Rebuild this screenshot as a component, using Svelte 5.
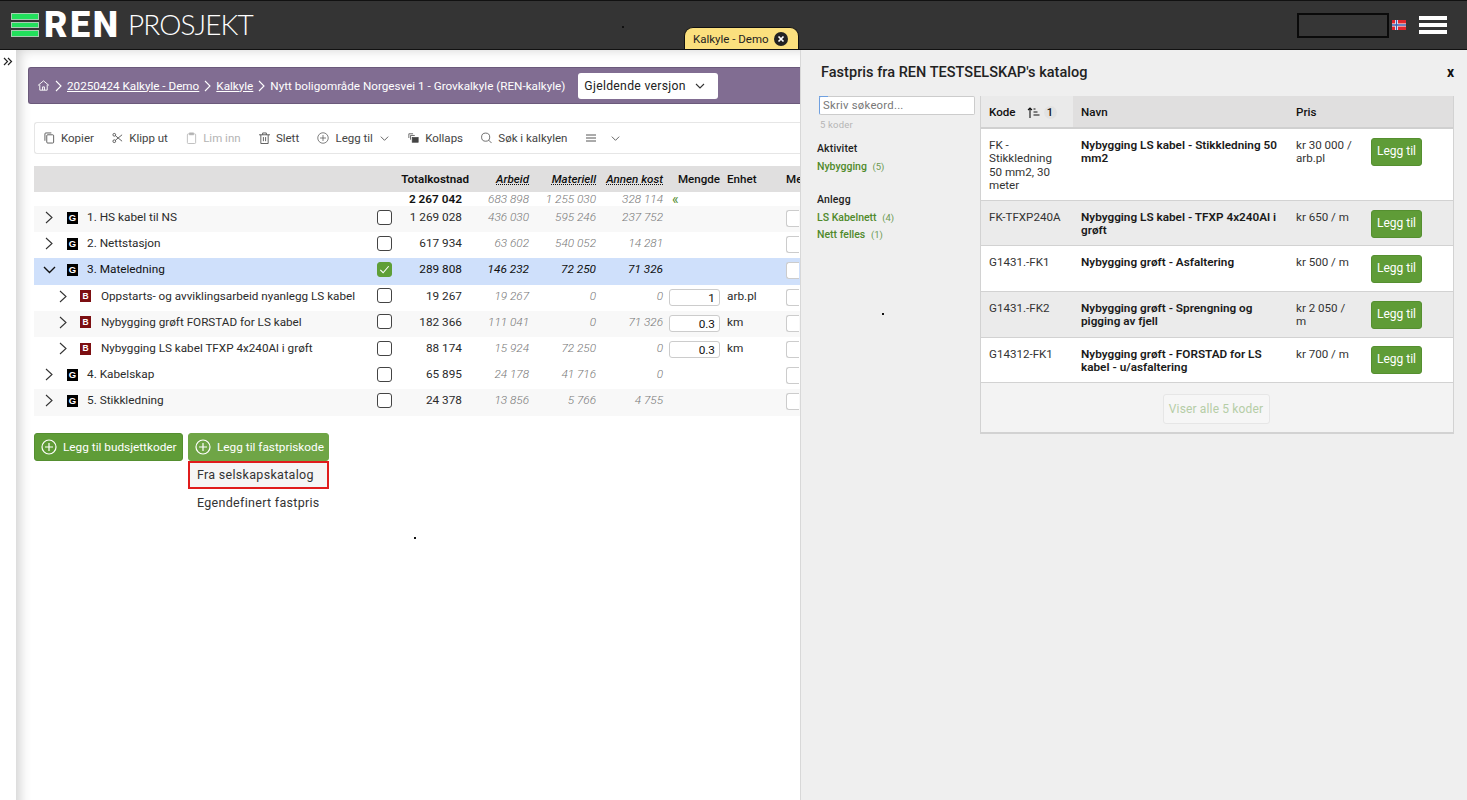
<script>
  const rows = [
    { lvl: 0, open: false, tag: 'G', name: '1. HS kabel til NS', t: '1 269 028', a: '436 030', m: '595 246', o: '237 752', tone: 'alt' },
    { lvl: 0, open: false, tag: 'G', name: '2. Nettstasjon', t: '617 934', a: '63 602', m: '540 052', o: '14 281', tone: '' },
    { lvl: 0, open: true, tag: 'G', name: '3. Mateledning', t: '289 808', a: '146 232', m: '72 250', o: '71 326', tone: 'sel', checked: true },
    { lvl: 1, open: false, tag: 'B', name: 'Oppstarts- og avviklingsarbeid nyanlegg LS kabel', t: '19 267', a: '19 267', m: '0', o: '0', q: '1', u: 'arb.pl', tone: '' },
    { lvl: 1, open: false, tag: 'B', name: 'Nybygging grøft FORSTAD for LS kabel', t: '182 366', a: '111 041', m: '0', o: '71 326', q: '0.3', u: 'km', tone: 'alt' },
    { lvl: 1, open: false, tag: 'B', name: 'Nybygging LS kabel TFXP 4x240Al i grøft', t: '88 174', a: '15 924', m: '72 250', o: '0', q: '0.3', u: 'km', tone: '' },
    { lvl: 0, open: false, tag: 'G', name: '4. Kabelskap', t: '65 895', a: '24 178', m: '41 716', o: '0', tone: '' },
    { lvl: 0, open: false, tag: 'G', name: '5. Stikkledning', t: '24 378', a: '13 856', m: '5 766', o: '4 755', tone: 'alt' }
  ];
  const codes = [
    { k: 'FK - Stikkledning 50 mm2, 30 meter', n: 'Nybygging LS kabel - Stikkledning 50 mm2', p: 'kr 30 000 / arb.pl', h: 72 },
    { k: 'FK-TFXP240A', n: 'Nybygging LS kabel - TFXP 4x240Al i grøft', p: 'kr 650 / m', h: 45, alt: true },
    { k: 'G1431.-FK1', n: 'Nybygging grøft - Asfaltering', p: 'kr 500 / m', h: 46 },
    { k: 'G1431.-FK2', n: 'Nybygging grøft - Sprengning og pigging av fjell', p: 'kr 2 050 / m', h: 46, alt: true },
    { k: 'G14312-FK1', n: 'Nybygging grøft - FORSTAD for LS kabel - u/asfaltering', p: 'kr 700 / m', h: 45 }
  ];
</script>

{#snippet chev(cls)}
  <svg class={cls} viewBox="0 0 12 12" fill="none" stroke="currentColor" stroke-width="1.1"><path d="M2 4l4 4 4-4"/></svg>
{/snippet}
{#snippet plus(cls)}
  <svg class={cls} viewBox="0 0 16 16" fill="none" stroke="currentColor" stroke-width="1.2"><circle cx="8" cy="8" r="7"/><path d="M8 4v8M4 8h8"/></svg>
{/snippet}

<header class="top">
  <div class="top-left">
    <div class="logo">
      <span class="bars"><i></i><i></i><i></i></span>
      <span class="ren">REN</span>
      <span class="prosjekt">PROSJEKT</span>
    </div>
    <div class="tab">
      <span>Kalkyle - Demo</span>
      <svg class="tab-x" viewBox="0 0 14 14"><circle cx="7" cy="7" r="7" fill="#222"/><path d="M4.5 4.5l5 5M9.5 4.5l-5 5" stroke="#fff" stroke-width="1.7"/></svg>
    </div>
  </div>
  <div class="top-right">
    <div class="blackbox"></div>
    <svg class="flag" viewBox="0 0 14 10"><rect width="14" height="10" fill="#e0262e"/><path d="M0 5h14M4.5 0v10" stroke="#fff" stroke-width="3"/><path d="M0 5h14M4.5 0v10" stroke="#3a5fae" stroke-width="1.4"/></svg>
    <div class="burger"><i></i><i></i><i></i></div>
  </div>
</header>

<div class="body">
  <aside class="rail">
    <svg viewBox="0 0 10 9" fill="none" stroke="#222" stroke-width="1.2"><path d="M1 1l3.5 3.5L1 8M5 1l3.5 3.5L5 8"/></svg>
  </aside>

  <main class="main">
    <nav class="crumb">
      <svg class="home" viewBox="0 0 14 14" fill="none" stroke="#fff" stroke-width="1"><path d="M1 7l6-5 6 5M3 6v6h8V6M6 12V8.500h2V12"/></svg>
      <svg class="sep" viewBox="0 0 7 12" fill="none" stroke="#fff" stroke-width="1.1"><path d="M1 1l5 5-5 5"/></svg>
      <a href="#a">20250424 Kalkyle - Demo</a>
      <svg class="sep" viewBox="0 0 7 12" fill="none" stroke="#fff" stroke-width="1.1"><path d="M1 1l5 5-5 5"/></svg>
      <a href="#b">Kalkyle</a>
      <svg class="sep" viewBox="0 0 7 12" fill="none" stroke="#fff" stroke-width="1.1"><path d="M1 1l5 5-5 5"/></svg>
      <span>Nytt boligområde Norgesvei 1 - Grovkalkyle (REN-kalkyle)</span>
      <div class="version"><span>Gjeldende versjon</span>{@render chev('vchev')}</div>
    </nav>

    <div class="toolbar">
      <span class="tool">
        <svg viewBox="0 0 12 13" fill="none" stroke="currentColor"><rect x="3" y="3" width="7.500" height="9" rx="1"/><path d="M1 9.500V2a1 1 0 0 1 1-1h6"/></svg>Kopier
      </span>
      <span class="tool">
        <svg viewBox="0 0 12 12" fill="none" stroke="currentColor" stroke-width=".9"><circle cx="2.500" cy="2.500" r="1.500"/><circle cx="2.500" cy="9.500" r="1.500"/><path d="M3.700 3.500L11 9.500M3.700 8.500L11 2.500"/></svg>Klipp ut
      </span>
      <span class="tool off">
        <svg viewBox="0 0 12 13" fill="none" stroke="currentColor"><rect x="1.500" y="2" width="9" height="10.500" rx="1"/><rect x="4" y="1" width="4" height="2" fill="currentColor"/></svg>Lim inn
      </span>
      <span class="tool">
        <svg viewBox="0 0 12 13" fill="none" stroke="currentColor"><path d="M0 3h12M4 3V1h4v2M2 3v9.500h8V3M4.800 5.500v4.500M7.200 5.500v4.500"/></svg>Slett
      </span>
      <span class="tool">
        {@render plus('tplus')}Legg til{@render chev('tchev')}
      </span>
      <span class="tool">
        <svg viewBox="0 0 13 12" fill="none" stroke="currentColor" stroke-width=".9"><path d="M1 6V1h5M3 8V3h5"/><rect x="5" y="5.500" width="7" height="5.500" fill="currentColor"/></svg>Kollaps
      </span>
      <span class="tool">
        <svg viewBox="0 0 13 13" fill="none" stroke="currentColor"><circle cx="5.500" cy="5.500" r="4.800"/><path d="M9 9l3.500 3.500"/></svg>Søk i kalkylen
      </span>
      <span class="tool last">
        <svg class="lines" viewBox="0 0 10 8" fill="none" stroke="currentColor"><path d="M0 1h10M0 4h10M0 7h10"/></svg>{@render chev('tchev2')}
      </span>
    </div>

    <section class="grid">
      <div class="row head">
        <span></span><span></span>
        <span class="num strong over">Totalkostnad</span>
        <span class="num ital">Arbeid</span>
        <span class="num ital">Materiell</span>
        <span class="num ital">Annen kost</span>
        <span class="num strong">Mengde</span>
        <span class="strong enhet">Enhet</span>
        <span class="strong">Me</span>
      </div>
      <div class="row sum">
        <span></span><span></span>
        <span class="num strong">2 267 042</span>
        <span class="num cost">683 898</span>
        <span class="num cost">1 255 030</span>
        <span class="num cost">328 114</span>
        <span class="back">«</span>
      </div>
      {#each rows as r}
        <div class="row item {r.tone}">
          <div class="name" class:sub={r.lvl === 1}>
            {#if r.open}
              <svg class="tree open" viewBox="0 0 13 8" fill="none" stroke="#111" stroke-width="1.400"><path d="M1 1l5.500 5.500L12 1"/></svg>
            {:else}
              <svg class="tree" viewBox="0 0 8 13" fill="none" stroke="#333" stroke-width="1.100"><path d="M1 1l6 5.500L1 12"/></svg>
            {/if}
            <span class="tag {r.tag}">{r.tag}</span>
            <span class="label">{r.name}</span>
          </div>
          <span class="check" class:on={r.checked}>
            {#if r.checked}<svg viewBox="0 0 14 14" fill="none" stroke="#fff" stroke-width="1.200"><path d="M2.500 7.500l3 3 6-7"/></svg>{/if}
          </span>
          <span class="num">{r.t}</span>
          <span class="num cost">{r.a}</span>
          <span class="num cost">{r.m}</span>
          <span class="num cost">{r.o}</span>
          <span class="gap"></span>
          {#if r.q}<span class="qty">{r.q}</span>{:else}<span></span>{/if}
          <span class="gap"></span>
          <span class="unit">{r.u ?? ''}</span>
          <span class="mbox"></span>
        </div>
      {/each}
    </section>

    <div class="actions">
      <button class="green">{@render plus('bplus')}Legg til budsjettkoder</button>
      <div class="drop">
        <button class="green light">{@render plus('bplus')}Legg til fastpriskode</button>
        <div class="menu">
          <div class="mi picked">Fra selskapskatalog</div>
          <div class="mi">Egendefinert fastpris</div>
        </div>
      </div>
    </div>
  </main>

  <aside class="panel">
    <div class="ptitle"><h2>Fastpris fra REN TESTSELSKAP's katalog</h2><b>x</b></div>
    <div class="pbody">
      <div class="filters">
        <div class="search">Skriv søkeord...</div>
        <div class="hits">5 koder</div>
        <h3>Aktivitet</h3>
        <div class="f">Nybygging <small>(5)</small></div>
        <h3 class="second">Anlegg</h3>
        <div class="f">LS Kabelnett <small>(4)</small></div>
        <div class="f">Nett felles <small>(1)</small></div>
      </div>
      <div class="ctable">
        <div class="crow chead">
          <span class="kode">Kode
            <svg class="sort" viewBox="0 0 13 11" fill="none" stroke="#111" stroke-width="1.100"><path d="M3 11V1M1 3l2-2 2 2M6.500 2h2M6.500 5h4M6.500 8h6"/></svg>
            <em>1</em>
          </span>
          <span>Navn</span>
          <span>Pris</span>
          <span></span>
        </div>
        {#each codes as c}
          <div class="crow" class:alt={c.alt} style="height:{c.h}px">
            <span>{c.k}</span>
            <b>{c.n}</b>
            <span>{c.p}</span>
            <span class="cbtn"><button class="green add">Legg til</button></span>
          </div>
        {/each}
        <div class="cfoot"><span class="all">Viser alle 5 koder</span></div>
      </div>
    </div>
  </aside>
</div>

<i class="speck s1"></i><i class="speck s2"></i><i class="speck s3"></i>

<style>
  :global(body) { margin: 0; background: #fff; font-family: Roboto, "Liberation Sans", sans-serif; color: #2b2b2b; }
  :global(#app) { position: relative; height: 800px; overflow: hidden; }
  button { font: inherit; }
  h2, h3 { margin: 0; }

  .top { height: 48px; display: flex; background: #343434; border-top: 1px solid #111; border-bottom: 1px solid #111; }
  .top-left { width: 799px; flex: none; display: flex; justify-content: space-between; }
  .logo { display: flex; align-items: center; padding-left: 11px; color: #fff; }
  .bars { display: flex; flex-direction: column; gap: 2px; width: 28px; }
  .bars i { height: 6.500px; background: #22e05c; border: 1px solid #a9cdb4; box-sizing: border-box; }
  .ren { font: 900 36px/1 Roboto, sans-serif; letter-spacing: 2.500px; margin-left: 5px; width: 84px; }
  .prosjekt { font: 300 28px/1 Lato, sans-serif; letter-spacing: -.9px; margin-top: -2px; }
  .tab { align-self: flex-end; height: 22px; width: 115px; box-sizing: border-box; display: flex; align-items: center; justify-content: space-between; padding: 0 10px 0 8px; background: #fbe07e; border: 1px solid #111; border-bottom: none; border-radius: 9px 9px 0 0; font-size: 11.500px; color: #222; white-space: nowrap; }
  .tab-x { width: 14px; height: 14px; flex: none; }
  .top-right { flex: 1; display: flex; align-items: center; justify-content: flex-end; padding: 0 20px 0 0; }
  .blackbox { width: 88px; height: 21px; border: 2px solid #0a0a0a; background: #363636; margin-top: 1px; }
  .flag { width: 14px; height: 10px; margin: 0 13px 0 3px; }
  .burger { width: 28px; display: flex; flex-direction: column; gap: 3px; }
  .burger i { height: 4px; background: #fff; }

  .body { height: 750px; display: flex; }
  .rail { width: 16px; flex: none; padding-top: 7px; box-sizing: border-box; }
  .rail svg { width: 10px; height: 9px; display: block; margin-left: 3px; }
  .main { width: 784px; flex: none; box-sizing: border-box; padding-top: 17px; padding-left: 12px; box-shadow: inset 12px 8px 12px -8px rgba(0,0,0,.18); overflow: hidden; }

  .crumb { height: 37px; box-sizing: border-box; display: flex; align-items: center; gap: 5px; padding-left: 8px; background: #816d92; border: 1px solid #6b5a7b; border-right: none; border-radius: 3px 0 0 3px; color: #fff; font-size: 11.700px; white-space: nowrap; }
  .crumb a { color: #fff; }
  .home { width: 13px; height: 13px; }
  .sep { width: 7px; height: 12px; }
  .version { margin-left: 8px; width: 140px; height: 26px; box-sizing: border-box; display: flex; align-items: center; gap: 8px; padding-left: 6px; background: #fff; border-radius: 3px; color: #222; font-size: 12.200px; letter-spacing: .3px; }
  .vchev { width: 12px; height: 12px; color: #333; }

  .toolbar { margin: 18px 0 0 6px; height: 32px; box-sizing: border-box; display: flex; align-items: center; padding-left: 9px; gap: 18.300px; border: 1px solid #e6e6e6; border-right: none; border-radius: 3px 0 0 3px; font-size: 11.500px; color: #444; white-space: nowrap; }
  .tool { display: inline-flex; align-items: center; gap: 6px; }
  .tool svg { width: 11px; height: 12px; stroke-width: .9; }
  .tool .tplus { width: 12px; height: 12px; }
  .tool .tchev { width: 11px; height: 11px; }
  .tool .lines { width: 10px; height: 8px; margin-right: 8px; }
  .tool .tchev2 { width: 11px; height: 11px; }
  .off { color: #b4b4b4; }

  .grid { margin: 12px 0 0 6px; font-size: 11.800px; }
  .row { display: grid; grid-template-columns: 341px 20px 67px 67px 67px 67px 6px 51px 7px 59px 13px; align-items: center; }
  .head { height: 26px; box-sizing: border-box; background: #e0dfdf; grid-template-columns: 341px 20px 74px 60px 67px 67px 57px 66px 13px; color: #111; font-size: 11.600px; overflow: hidden; white-space: nowrap; }
  .sum { height: 14px; line-height: 14px; }
  .item { height: 26.200px; padding-bottom: 4px; box-sizing: border-box; }
  .alt { background: #f8f8f8; }
  .sel { background: #cfe0fb; color: #111; }
  .num { text-align: right; white-space: nowrap; }
  .strong { font-weight: 500; color: #111; }
  .ital { font-style: italic; font-weight: 500; text-decoration: underline dotted; color: #111; }
  .over { font-weight: 600; }
  .cost { font-style: italic; font-weight: 300; color: #777; }
  .sel .cost { color: #111; font-weight: 400; }
  .sum .strong { font-weight: 600; }
  .back { color: #4f8a2b; grid-column: 7 / span 3; padding-left: 9px; font-size: 14px; }
  .enhet { padding-left: 7px; }
  .name { display: flex; align-items: center; padding-left: 11px; white-space: nowrap; }
  .name.sub { padding-left: 25px; }
  .tree { width: 8px; height: 13px; flex: none; margin-top: 1px; }
  .tree.open { width: 13px; height: 8px; margin-left: -2px; margin-right: -3px; }
  .tag { width: 11px; height: 12px; margin: 1px 0 0 14px; display: flex; align-items: center; justify-content: center; flex: none; font: 700 9.500px/1 "Liberation Sans", sans-serif; color: #fff; background: #000; }
  .tag.B { background: #7c0f12; margin-left: 13px; font-size: 8.500px; }
  .label { margin-left: 9px; }
  .sub .label { margin-left: 10px; font-size: 11.700px; }
  .check { width: 15px; height: 15px; box-sizing: border-box; border: 1px solid #444; border-radius: 3px; margin-left: 2px; background: #fff; }
  .check.on { background: #5f9f37; border-color: #5f9f37; }
  .check svg { display: block; width: 13px; height: 13px; }
  .qty { height: 17px; line-height: 17px; box-sizing: border-box; margin-top: 3px; border: 1px solid #ccc; border-radius: 3px; background: #fff; text-align: right; padding-right: 4px; color: #111; }
  .unit { margin-top: 0; }
  .mbox { height: 17px; width: 13px; box-sizing: border-box; margin-top: 3px; border: 1px solid #ccc; border-right: none; background: #fff; border-radius: 3px 0 0 3px; }

  .actions { margin: 17px 0 0 6px; display: flex; gap: 5px; align-items: flex-start; font-size: 11.800px; }
  .green { display: flex; align-items: center; background: #5f9c37; color: #fff; border: 1px solid #558f30; border-radius: 3px; padding: 0; white-space: nowrap; }
  .actions .green { height: 28px; padding: 0 6px; gap: 6px; width: 149px; box-sizing: border-box; }
  .drop { width: 141px; }
  .actions .light { width: 141px; background: #6fa546; border-color: #6fa546; }
  .bplus { width: 16px; height: 16px; flex: none; }
  .menu { font-size: 12.500px; color: #333; letter-spacing: .3px; }
  .mi { height: 26px; line-height: 28px; padding-left: 9px; }
  .picked { height: 28px; box-sizing: border-box; line-height: 24px; padding-left: 7px; border: 2px solid #e01c1c; background: #f5f5f5; }

  .panel { flex: 1; background: #efefef; border-left: 1px solid #d8d8d8; box-sizing: border-box; padding: 13px 13px 0 16px; font-size: 12px; }
  .ptitle { display: flex; justify-content: space-between; align-items: center; padding-left: 4px; height: 18px; }
  .ptitle h2 { font-size: 14.500px; font-weight: 500; color: #222; letter-spacing: .03px; }
  .ptitle b { font-size: 14px; color: #111; margin-right: 0; }
  .pbody { display: flex; margin-top: 15px; }
  .filters { width: 163px; flex: none; font-size: 10.500px; }
  .search { position: relative; margin-left: 2px; width: 156px; height: 19px; box-sizing: border-box; line-height: 17px; background: #fff; border: 1px solid #ccc; border-left-color: #6fa0e0; border-radius: 2px; padding-left: 3px; font-size: 11.300px; color: #777; letter-spacing: .25px; }
  .search::before { content: ""; position: absolute; left: -1px; top: -1px; width: 9px; height: 1px; background: #6fa0e0; }
  .hits { margin: 2px 0 0 3px; color: #b5b5b5; font-size: 9.500px; height: 15px; line-height: 15px; letter-spacing: .2px; }
  .filters h3 { font-size: 10.500px; font-weight: 500; margin-top: 10px; line-height: 14px; color: #222; letter-spacing: .15px; }
  .filters .second { margin-top: 19px; }
  .f { color: #4f8a2b; font-weight: 500; margin-top: 3px; line-height: 14px; height: 14px; }
  .filters h3 + .f { margin-top: 4px; }
  .f small { font-size: 9.500px; font-weight: 400; color: #6c9a52; margin-left: 3px; }
  .ctable { width: 474px; flex: none; border: 1px solid #d2d2d2; border-top: none; box-sizing: border-box; }
  .crow { display: grid; grid-template-columns: 92px 215px 83px 1fr; background: #fff; border-bottom: 1px solid #d2d2d2; box-sizing: border-box; line-height: 13.400px; color: #333; font-size: 11.600px; }
  .crow > * { padding: 10px 9px 0 8px; }
  .crow > :nth-child(3) { padding-right: 16px; }
  .crow b { font-weight: 600; color: #1a1a1a; padding-right: 2px; font-size: 11.750px; }
  .crow.alt { background: #ebebeb; }
  .chead { height: 33px; background: #e0dfdf; color: #111; font-weight: 500; border-bottom: 2px solid #d0d0d0; }
  .kode { display: flex; gap: 0; align-items: flex-start; background: #eaeaea; height: 31px; box-sizing: border-box; }
  .sort { width: 13px; height: 11px; margin: 1px 0 0 11px; }
  .kode em { font-style: normal; width: 13px; height: 13px; line-height: 13px; margin-left: 4px; text-align: center; font-size: 11px; background: #e2e2e2; border-radius: 50%; }
  .crow .cbtn { padding: 9px 0 0 0; }
  .crow:nth-child(6) .cbtn { padding-top: 8px; }
  .add { width: 51px; height: 28px; box-sizing: border-box; justify-content: center; font-size: 12px; }
  .cfoot { height: 51px; background: #f3f3f3; border-top: 1px solid #d2d2d2; margin-top: -1px; border-bottom: 1px solid #d2d2d2; box-sizing: border-box; display: flex; justify-content: center; padding-top: 11px; }
  .all { width: 107px; height: 30px; box-sizing: border-box; line-height: 28px; text-align: center; border: 1px solid #e6e6e6; border-radius: 3px; background: #f6f6f6; color: #b5cda6; font-size: 12px; letter-spacing: .15px; margin-left: -2px; }

  .speck { position: absolute; width: 2px; height: 2px; background: #111; }
  .s1 { left: 622px; top: 26px; }
  .s2 { left: 882px; top: 313px; }
  .s3 { left: 414px; top: 537px; }
</style>
